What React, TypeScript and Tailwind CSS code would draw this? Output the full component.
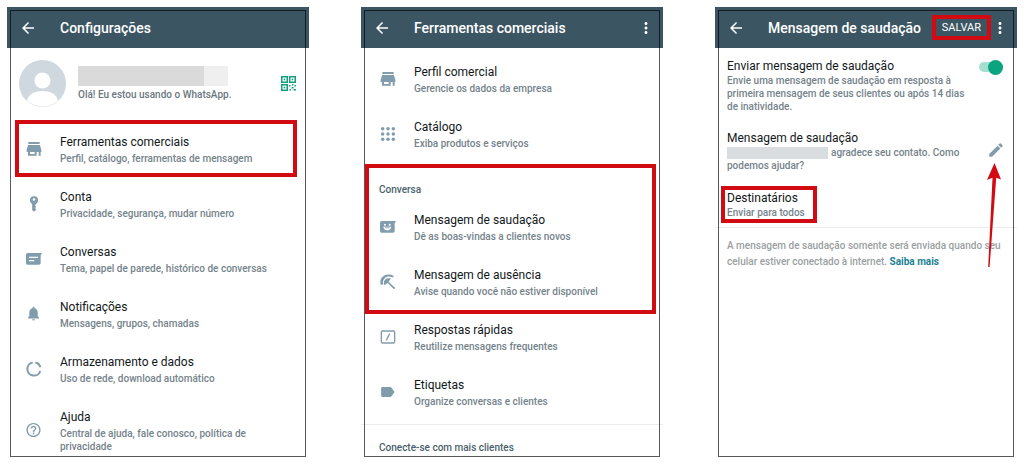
import type { ReactNode } from 'react';
import { MdArrowBack, MdEdit, MdHelpOutline, MdLabel, MdMoreVert, MdNotifications } from 'react-icons/md';

function StoreIcon() {
  return (
    <svg viewBox="0 0 24 24" className="w-4 h-4" fill="currentColor">
      <path d="M3.500 1.500h17v3h-17z" />
      <path fillRule="evenodd" d="M3.200 6h17.600L23 13v3.500h-1V22h-3v-5.500h-3V22H3v-5.500H1V13zM6 16.500v3h7v-3z" />
    </svg>
  );
}

function KeyIcon() {
  return (
    <svg viewBox="0 0 24 24" className="w-4 h-4" fill="currentColor">
      <path
        fillRule="evenodd"
        d="M12 0.500a6 6 0 0 0-6 6c0 2.400 1.300 4.400 3.200 5.400V21l2.800 2.500 2.800-2.500v-1.800l-1.400-1.200 1.400-1.200v-1.600l-1.400-1.200 1.400-1.200V11.900c1.900-1 3.200-3 3.200-5.400a6 6 0 0 0-6-6zm0 2.800a2 2 0 1 1 0 4 2 2 0 0 1 0-4z"
      />
    </svg>
  );
}

function ChatIcon() {
  return (
    <svg viewBox="0 0 24 24" className="w-4 h-4" fill="currentColor">
      <path
        fillRule="evenodd"
        d="M2.500 3H24l-2 3.500V18a2.500 2.500 0 0 1-2.500 2.500h-17A2.500 2.500 0 0 1 0 18V5.500A2.500 2.500 0 0 1 2.500 3zM4.500 8.500v2H18v-2zm0 5v2h8v-2z"
      />
    </svg>
  );
}

function GreetingIcon() {
  return (
    <svg viewBox="0 0 24 24" className="w-4 h-4">
      <path fill="currentColor" d="M2.500 3H24l-2 3.500V18a2.500 2.500 0 0 1-2.500 2.500h-17A2.500 2.500 0 0 1 0 18V5.500A2.500 2.500 0 0 1 2.500 3z" />
      <g fill="#fff">
        <circle cx="7.500" cy="8.500" r="1.500" />
        <circle cx="14.500" cy="8.500" r="1.500" />
        <path d="M5 11.500h12c-.6 3.800-3 5.500-6 5.500s-5.400-1.700-6-5.500z" />
      </g>
      <path fill="currentColor" d="M7.500 12.500h7v1.300h-7z" />
    </svg>
  );
}

function UmbrellaIcon() {
  return (
    <svg viewBox="0 0 24 24" className="w-4 h-4" fill="currentColor">
      <path d="M1.500 16.500C-.5 11.500.5 7 4 4c4.500-4 11-4 17-1l-2.500 2.200c-4-2-8.500-1.700-11.300 1C4.500 8.800 3.800 12 5 15.500z" />
      <path d="M6.500 17c-1.300-3.700-.8-6.800 1.300-8.800s5-2.500 8.700-1.500l-3.800 5L23 21l-2 2-9.500-9.500z" />
    </svg>
  );
}

function DataIcon() {
  return (
    <svg viewBox="0 0 24 24" className="w-4 h-4" fill="none" stroke="currentColor" strokeWidth="3">
      <path d="M14 2.200a10 10 0 0 1 7.600 7.200" />
      <path d="M21.500 15A10 10 0 0 1 2 12a10 10 0 0 1 8-9.800" />
    </svg>
  );
}

function GridIcon() {
  return (
    <svg viewBox="0 0 24 24" className="w-4 h-4" fill="currentColor">
      {[4, 12, 20].map(y => [4, 12, 20].map(x => <circle key={`${x}-${y}`} cx={x} cy={y} r="2.600" />))}
    </svg>
  );
}

function QuickReplyIcon() {
  return (
    <svg viewBox="0 0 24 24" className="w-4 h-4" fill="none" stroke="currentColor" strokeWidth="2">
      <rect x="2" y="3" width="20" height="18" rx="2" />
      <path d="M9.500 17l5-10" />
    </svg>
  );
}

function QrIcon() {
  return (
    <svg viewBox="0 0 15 15" className="w-[15px] h-[15px]" fill="#12a07c">
      <path fillRule="evenodd" d="M0 0h7v7H0zM1.500 1.500v4h4v-4zM8 0h7v7H8zM9.500 1.500v4h4v-4zM0 8h7v7H0zM1.500 9.500v4h4v-4z" />
      <path d="M2.700 2.700h1.600v1.600H2.700zM10.700 2.700h1.600v1.600h-1.600zM2.700 10.700h1.600v1.600H2.700z" />
      <path d="M8 9h1.500v1.500H8zM11 8h1.500v1.500H11zM13.500 9h1.500v1.500h-1.500zM10.500 11h2v1.500h-2zM8.500 13H10v1.500H8.500zM12.500 13H15v1.500h-2.500z" />
    </svg>
  );
}

function Screen({ title, actions, children }: { title: string; actions?: ReactNode; children: ReactNode }) {
  return (
    <section className="relative">
      <header className="flex items-center h-[41px] pl-3 pr-2 bg-[#3b5563] text-white">
        <button type="button" aria-label="Voltar" className="shrink-0">
          <MdArrowBack className="w-[18px] h-[18px]" />
        </button>
        <h1 className="ml-[23px] text-[14px] leading-5 font-medium whitespace-nowrap">{title}</h1>
        <div className="ml-auto flex items-center">{actions}</div>
      </header>
      {children}
      {/* moldura */}
      <div className="absolute top-[3px] bottom-0 inset-x-[3px] border border-black/65 pointer-events-none" />
    </section>
  );
}

function MoreButton() {
  return (
    <button type="button" aria-label="Mais opções">
      <MdMoreVert className="w-[18px] h-[18px]" />
    </button>
  );
}

function Item({ icon, title, children }: { icon: ReactNode; title: string; children: ReactNode }) {
  return (
    <button type="button" className="flex items-center w-full py-3 pl-[18px] pr-9 text-left">
      <span className="shrink-0 flex justify-center w-[17px] pb-0.5 text-[#819cad]">{icon}</span>
      <span className="ml-[18px]">
        <span className="block text-[12px] leading-4 text-[#11171a]">{title}</span>
        <span className="block mt-0.5 text-[10px] leading-[13px] font-medium text-[#75838b]">{children}</span>
      </span>
    </button>
  );
}

function Settings() {
  return (
    <Screen title="Configurações">
      <div className="flex items-center pt-3 pb-[15px] pl-3 pr-[13px]">
        <svg viewBox="0 0 47 47" className="shrink-0 w-[47px] h-[47px]">
          <circle cx="23.500" cy="23.500" r="23.500" fill="#cfd7df" />
          <circle cx="23.500" cy="20.500" r="8" fill="#fff" />
          <path d="M8 40.500c1.500-6.500 8-9.500 15.500-9.500s14 3 15.500 9.500a22.500 22.500 0 0 1-31 0z" fill="#fff" />
        </svg>
        <div className="ml-3 grow">
          <div className="flex w-[150px] h-5">
            <div className="w-[126px] bg-[#dadada]" />
            <div className="grow bg-[#efefef]" />
          </div>
          <p className="mt-0.5 text-[10px] leading-[13px] font-medium text-[#6b777e]">Olá! Eu estou usando o WhatsApp.</p>
        </div>
        <button type="button" aria-label="Código QR">
          <QrIcon />
        </button>
      </div>
      <div className="relative">
        <Item icon={<StoreIcon />} title="Ferramentas comerciais">Perfil, catálogo, ferramentas de mensagem</Item>
        <div className="absolute -top-0.5 bottom-0 left-2 right-3 border-4 border-[#d20a11] pointer-events-none" />
      </div>
      <Item icon={<KeyIcon />} title="Conta">Privacidade, segurança, mudar número</Item>
      <Item icon={<ChatIcon />} title="Conversas">Tema, papel de parede, histórico de conversas</Item>
      <Item icon={<MdNotifications className="w-[17px] h-[17px]" />} title="Notificações">Mensagens, grupos, chamadas</Item>
      <Item icon={<DataIcon />} title="Armazenamento e dados">Uso de rede, download automático</Item>
      <div className="-mb-2">
        <Item icon={<MdHelpOutline className="w-[18px] h-[18px]" />} title="Ajuda">
          Central de ajuda, fale conosco, política de<br />privacidade
        </Item>
      </div>
    </Screen>
  );
}

function BusinessTools() {
  return (
    <Screen title="Ferramentas comerciais" actions={<MoreButton />}>
      <div className="pt-1">
        <Item icon={<StoreIcon />} title="Perfil comercial">Gerencie os dados da empresa</Item>
        <Item icon={<GridIcon />} title="Catálogo">Exiba produtos e serviços</Item>
      </div>
      <div className="relative">
        <h2 className="pt-5 pb-0.5 pl-[18px] text-[10px] leading-4 font-medium text-[#4a5f6b]">Conversa</h2>
        <Item icon={<GreetingIcon />} title="Mensagem de saudação">Dê as boas-vindas a clientes novos</Item>
        <Item icon={<UmbrellaIcon />} title="Mensagem de ausência">
          Avise quando você não estiver disponível
        </Item>
        <div className="absolute top-0.5 -bottom-1 left-1 right-[7px] border-4 border-[#d20a11] pointer-events-none" />
      </div>
      <Item icon={<QuickReplyIcon />} title="Respostas rápidas">Reutilize mensagens frequentes</Item>
      <Item icon={<MdLabel className="w-[18px] h-[18px]" />} title="Etiquetas">Organize conversas e clientes</Item>
      <h2 className="mt-1 pt-[15px] pl-[18px] border-t border-[#ececec] text-[10px] leading-4 font-medium text-[#4a5f6b]">
        Conecte-se com mais clientes
      </h2>
    </Screen>
  );
}

function Greeting() {
  return (
    <Screen
      title="Mensagem de saudação"
      actions={
        <>
          <button type="button" className="px-1.5 h-[25px] border-4 border-[#d20a11] text-[11px] leading-4">
            SALVAR
          </button>
          <MoreButton />
        </>
      }
    >
      <div className="px-3 text-[10px] leading-[13px] font-medium text-[#75838b]">
        <label className="flex items-start justify-between pt-2.5">
          <span>
            <span className="block text-[12px] leading-4 font-normal text-[#11171a]">Enviar mensagem de saudação</span>
            Envie uma mensagem de saudação em resposta à<br />
            primeira mensagem de seus clientes ou após 14 dias<br />
            de inatividade.
          </span>
          <input type="checkbox" defaultChecked className="peer sr-only" />
          <span className="flex items-center justify-end w-6 h-2.5 mt-1 mr-0.5 rounded-full bg-[#a5dfcf]">
            <span className="shrink-0 w-[15px] h-[15px] rounded-full bg-[#0aa57f]" />
          </span>
        </label>
        <div className="flex items-center justify-between pt-[17px]">
          <div>
            <h2 className="text-[12px] leading-4 font-normal text-[#11171a]">Mensagem de saudação</h2>
            <p>
              <span className="inline-block w-[101px] h-3 mr-[3px] align-middle bg-[#dadddf]" />
              agradece seu contato. Como<br />podemos ajudar?
            </p>
          </div>
          {/* lápis com a seta apontando para ele */}
          <div className="relative mb-0.5">
            <button type="button" aria-label="Editar mensagem" className="block text-[#819cad]">
              <MdEdit className="w-[18px] h-[18px]" />
            </button>
            <svg viewBox="0 0 16 104" className="absolute top-[22px] -left-px w-4 h-[104px] pointer-events-none" fill="#d20a11">
              <path d="M8.500 0L15 16.500l-4.800-1.800L3.600 104H2.200L6.500 14.700 1 17z" />
            </svg>
          </div>
        </div>
        <div className="relative pt-[18px] pb-2">
          <h2 className="text-[12px] leading-4 font-normal text-[#11171a]">Destinatários</h2>
          <p>Enviar para todos</p>
          <div className="absolute top-[14px] bottom-1 -left-1.5 w-24 border-4 border-[#d20a11] pointer-events-none" />
        </div>
      </div>
      <p className="pt-2.5 pl-3 border-t border-[#ececec] text-[10px] leading-4 font-medium text-[#9a9fa2]">
        A mensagem de saudação somente será enviada quando seu<br />
        celular estiver conectado à internet. <a href="#" className="font-bold text-[#1b7f93]">Saiba mais</a>
      </p>
    </Screen>
  );
}

export default function App() {
  return (
    <main className="grid grid-cols-3 gap-[52px] p-[7px] bg-white font-['Roboto','Liberation_Sans',sans-serif]">
      <Settings />
      <BusinessTools />
      <Greeting />
    </main>
  );
}
